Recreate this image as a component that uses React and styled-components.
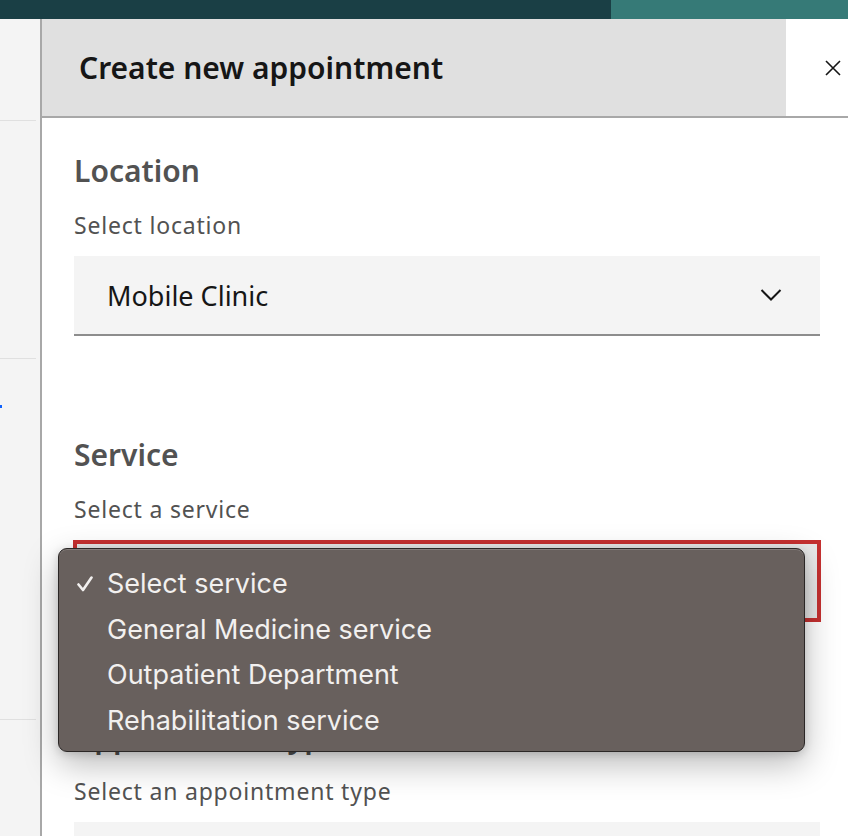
import React from "react";
import styled, { createGlobalStyle } from "styled-components";

const Global = createGlobalStyle`
  html, body { margin: 0; padding: 0; }
  body {
    width: 848px;
    height: 836px;
    overflow: hidden;
    background: #ffffff;
    font-family: "Noto Sans", "Open Sans", sans-serif;
  }
`;

const Page = styled.div`
  display: flex;
  flex-direction: column;
  width: 848px;
  height: 836px;
  overflow: hidden;
`;

const TopBar = styled.div`
  display: flex;
  height: 19px;
  flex-shrink: 0;
`;

const TopSegment = styled.div`
  background: ${(p) => p.$color};
  width: ${(p) => p.$width};
  flex: ${(p) => (p.$grow ? 1 : "none")};
`;

const Body = styled.div`
  display: flex;
  flex: 1;
  min-height: 0;
`;

const Rail = styled.div`
  width: 40px;
  flex-shrink: 0;
  background: #f4f4f4;
  display: flex;
  flex-direction: column;
`;

const RailDivider = styled.div`
  height: 1px;
  width: 36px;
  background: #e0e0e0;
  margin-top: ${(p) => p.$top}px;
`;

const RailLink = styled.div`
  width: 2px;
  height: 3px;
  background: #0f62fe;
  margin-top: ${(p) => p.$top}px;
`;

const Panel = styled.div`
  width: 838px;
  flex-shrink: 0;
  border-left: 2px solid #a8a8a8;
  display: flex;
  flex-direction: column;
`;

const Header = styled.div`
  display: flex;
  height: 97px;
  border-bottom: 2px solid #a8a8a8;
  flex-shrink: 0;
`;

const HeaderTitleArea = styled.div`
  flex: 1;
  background: #e0e0e0;
  display: flex;
  align-items: center;
  padding-left: 37px;
`;

const Title = styled.h2`
  margin: 0;
  font-family: "Noto Sans", sans-serif;
  font-weight: 600;
  font-size: 30px;
  color: #161616;
  letter-spacing: 0;
`;

const CloseButton = styled.button`
  width: 94px;
  flex-shrink: 0;
  border: none;
  background: #ffffff;
  display: flex;
  align-items: center;
  justify-content: center;
  padding: 0;
`;

const Form = styled.div`
  display: flex;
  flex-direction: column;
  padding: 33px 60px 0 32px;
  gap: 99px;
`;

const Section = styled.section`
  display: flex;
  flex-direction: column;
`;

const SectionHeading = styled.h3`
  margin: 0;
  height: 40px;
  line-height: 40px;
  font-family: "Noto Sans", sans-serif;
  font-size: 30px;
  font-weight: 600;
  color: #525252;
`;

const FieldLabel = styled.label`
  margin-top: 18px;
  height: 32px;
  line-height: 32px;
  font-family: "Noto Sans", sans-serif;
  font-size: 23px;
  letter-spacing: 0.8px;
  color: #525252;
`;

const SelectWrap = styled.div`
  position: relative;
  margin-top: 15px;
`;

const SelectBox = styled.div`
  box-sizing: border-box;
  height: ${(p) => (p.$invalid ? 82 : 80)}px;
  margin: ${(p) => (p.$invalid ? "0 -1px -4px" : "0")};
  background: ${(p) => (p.$invalid ? "#e8e8e8" : "#f4f4f4")};
  border: ${(p) => (p.$invalid ? "4px solid #c53030" : "none")};
  border-bottom: ${(p) => (p.$invalid ? "4px solid #c53030" : "2px solid #8d8d8d")};
  display: flex;
  align-items: center;
  justify-content: space-between;
  padding: 0 38px 0 33px;
  font-family: "Noto Sans", sans-serif;
  font-size: 27px;
  color: #161616;
`;

const Popup = styled.div`
  position: absolute;
  left: -16px;
  top: 8px;
  width: 747px;
  height: 204px;
  box-sizing: border-box;
  border-radius: 9px;
  background: #68605d;
  border: 1px solid #2b2726;
  box-shadow: inset 0 1px 0 rgba(255, 255, 255, 0.18),
    0 12px 34px rgba(0, 0, 0, 0.28), 0 2px 8px rgba(0, 0, 0, 0.15);
  padding: 12px 0 8px;
  display: flex;
  flex-direction: column;
  z-index: 5;
`;

const Option = styled.div`
  height: 46px;
  display: flex;
  align-items: center;
  font-family: Inter, "Noto Sans", sans-serif;
  font-size: 27px;
  color: #f2f0ef;
`;

const Check = styled.span`
  width: 48px;
  flex-shrink: 0;
  display: flex;
  justify-content: flex-end;
  padding-right: 14px;
  box-sizing: border-box;
`;

const Chevron = () => (
  <svg width="22" height="14" viewBox="0 0 22 14" fill="none">
    <path d="M1.5 2 L11 11.5 L20.5 2" stroke="#161616" strokeWidth="2" />
  </svg>
);

const CloseIcon = () => (
  <svg width="16" height="16" viewBox="0 0 16 16" fill="none">
    <path d="M1 1 L15 15 M15 1 L1 15" stroke="#161616" strokeWidth="1.6" />
  </svg>
);

const CheckIcon = () => (
  <svg width="16" height="16" viewBox="0 0 16 16" fill="none">
    <path d="M1.5 8.5 L6 14 L14.5 1.5" stroke="#f2f0ef" strokeWidth="2.6" strokeLinecap="round" strokeLinejoin="round" />
  </svg>
);

const options = [
  { label: "Select service", checked: true },
  { label: "General Medicine service" },
  { label: "Outpatient Department" },
  { label: "Rehabilitation service" },
];

export default function App() {
  return (
    <Page>
      <Global />
      <TopBar>
        <TopSegment $color="#1a3f45" $width="611px" />
        <TopSegment $color="#367a77" $grow />
      </TopBar>
      <Body>
        <Rail>
          <RailDivider $top={101} />
          <RailDivider $top={237} />
          <RailLink $top={46} />
          <RailDivider $top={311} />
        </Rail>
        <Panel>
          <Header>
            <HeaderTitleArea>
              <Title>Create new appointment</Title>
            </HeaderTitleArea>
            <CloseButton aria-label="Close">
              <CloseIcon />
            </CloseButton>
          </Header>
          <Form>
            <Section>
              <SectionHeading>Location</SectionHeading>
              <FieldLabel>Select location</FieldLabel>
              <SelectWrap>
                <SelectBox>
                  <span>Mobile Clinic</span>
                  <Chevron />
                </SelectBox>
              </SelectWrap>
            </Section>
            <Section>
              <SectionHeading>Service</SectionHeading>
              <FieldLabel>Select a service</FieldLabel>
              <SelectWrap>
                <SelectBox $invalid />
                <Popup>
                  {options.map((o) => (
                    <Option key={o.label}>
                      <Check>{o.checked ? <CheckIcon /> : null}</Check>
                      {o.label}
                    </Option>
                  ))}
                </Popup>
              </SelectWrap>
            </Section>
            <Section>
              <SectionHeading>Appointment type</SectionHeading>
              <FieldLabel>Select an appointment type</FieldLabel>
              <SelectWrap>
                <SelectBox />
              </SelectWrap>
            </Section>
          </Form>
        </Panel>
      </Body>
    </Page>
  );
}
